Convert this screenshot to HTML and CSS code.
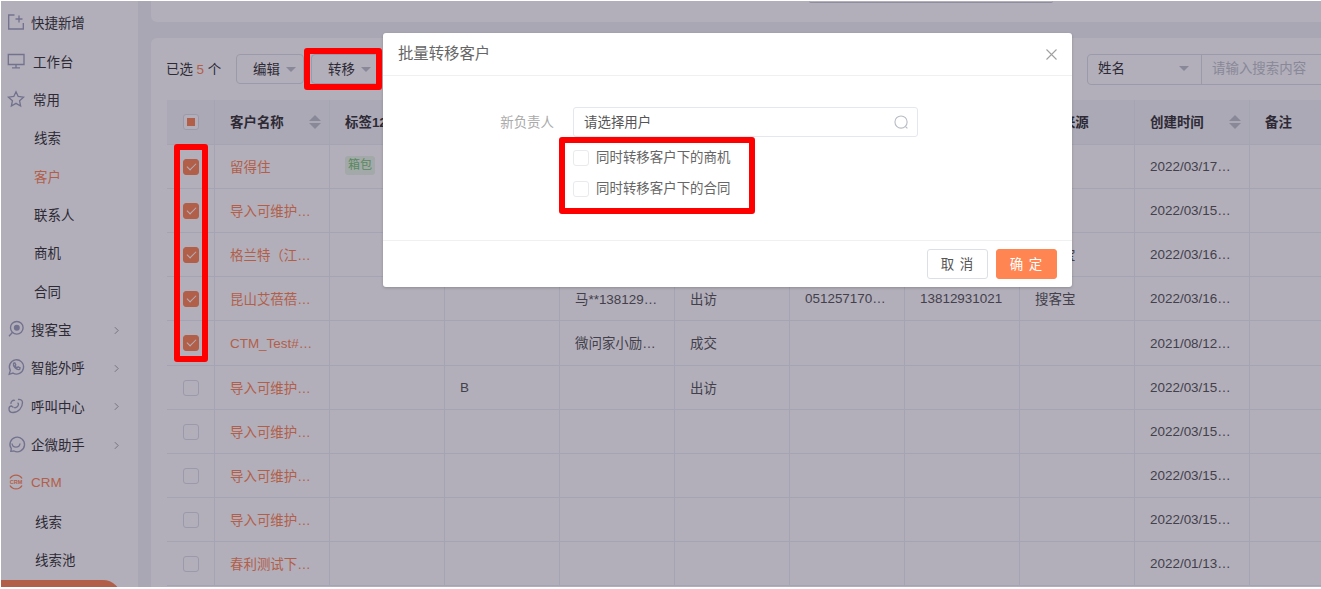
FILE: index.html
```html
<!DOCTYPE html>
<html lang="zh-CN">
<head>
<meta charset="utf-8">
<title>批量转移客户</title>
<link rel="stylesheet" href="styles.css">
</head>
<body>
<div class="app">
  <aside class="sidebar">
    <div class="nav-item"><svg class="nav-icon" viewBox="0 0 16 16"><path d="M6.500 1H.7v14h14.600V9M11 1.500v7M7.500 5h7"/></svg><span class="nav-label">快捷新增</span></div>
    <div class="nav-item"><svg class="nav-icon" viewBox="0 0 16 16"><path d="M.3 1.500h15.700v10H.3zM8 11.500v3.300M4 14.800h8"/></svg><span class="nav-label nav-label-b">工作台</span></div>
    <div class="nav-item"><svg class="nav-icon" viewBox="0 0 16 16"><path d="M8 .8l2.200 4.700 5.300.7-3.900 3.600 1 5.200L8 12.400 3.400 15l1-5.200L.5 6.200l5.300-.7z"/></svg><span class="nav-label nav-label-b">常用</span></div>
    <div class="nav-item"><span class="nav-sub">线索</span></div>
    <div class="nav-item nav-active"><span class="nav-sub">客户</span></div>
    <div class="nav-item"><span class="nav-sub">联系人</span></div>
    <div class="nav-item"><span class="nav-sub">商机</span></div>
    <div class="nav-item"><span class="nav-sub">合同</span></div>
    <div class="nav-item"><svg class="nav-icon" viewBox="0 0 16 16"><circle cx="8.800" cy="6.800" r="6.300"/><circle class="icon-fill" cx="8.800" cy="6.800" r="3"/><path d="M4.300 11.500L1 15.200"/></svg><span class="nav-label">搜客宝</span><svg class="nav-arrow" viewBox="0 0 6 10"><path d="M1 1l4 4-4 4"/></svg></div>
    <div class="nav-item"><svg class="nav-icon" viewBox="0 0 16 16"><path d="M1.200 15.300l1.100-3.900A7.100 7.100 0 1 1 5 14.100z"/><path d="M5.500 4.300c-.9 3.100 3 7 6.100 6.100l.5-1.500-2-1-1 .8C7.800 8.300 7.300 7.600 7 6.800l.8-1-1-1.900z"/></svg><span class="nav-label">智能外呼</span><svg class="nav-arrow" viewBox="0 0 6 10"><path d="M1 1l4 4-4 4"/></svg></div>
    <div class="nav-item"><svg class="nav-icon" viewBox="0 0 16 16"><path d="M10 1.500c2.500-.5 4.500 1 4.500 3 0 5-4 10-9.500 10-2.500 0-4-1.500-4-3.500 0-1.500 1-3 2.500-3l2 1.500M3 6C2.500 3.500 5 1.500 7 2.500M9.500 5c1.500.5 1 2.500 0 3.500s-2.500 1.500-3.500 1"/></svg><span class="nav-label">呼叫中心</span><svg class="nav-arrow" viewBox="0 0 6 10"><path d="M1 1l4 4-4 4"/></svg></div>
    <div class="nav-item"><svg class="nav-icon" viewBox="0 0 16 16"><path d="M2.800 15.300l.5-2.600A7.300 7.300 0 1 1 6 15z"/><path d="M4 7.500c.5 4.800 7.500 4.800 8 0"/></svg><span class="nav-label">企微助手</span><svg class="nav-arrow" viewBox="0 0 6 10"><path d="M1 1l4 4-4 4"/></svg></div>
    <div class="nav-item nav-active"><svg class="nav-icon nav-icon-crm" viewBox="0 0 16 16"><path d="M2 4.500a7 7 0 0 1 12 0M2 11.500a7 7 0 0 0 12 0"/><text class="crm-text" x="8" y="10">CRM</text></svg><span class="nav-label">CRM</span></div>
    <div class="nav-item"><span class="nav-sub nav-sub-b">线索</span></div>
    <div class="nav-item"><span class="nav-sub nav-sub-b">线索池</span></div>
    <div class="nav-pill"></div>
  </aside>

  <main class="main">
    <section class="top-card"><div class="top-field"></div></section>
    <section class="table-card">
      <div class="card-inner">
        <div class="toolbar">
          <div class="selection">已选 <em>5</em> 个</div>
          <button class="tool-btn">编辑<i class="caret"></i></button>
          <button class="tool-btn">转移<i class="caret"></i></button>
          <div class="search">
            <div class="search-select">姓名<i class="caret"></i></div>
            <div class="search-input">请输入搜索内容</div>
          </div>
        </div>
        <table class="grid">
          <colgroup><col class="col-check"><col span="10" class="col-data"></colgroup>
          <thead>
            <tr>
              <th class="check-cell"><span class="check check-partial"></span></th>
              <th><span class="th-sort">客户名称<i class="sort"></i></span></th>
              <th>标签12</th><th></th><th></th><th></th><th></th><th></th><th>客户来源</th>
              <th><span class="th-sort">创建时间<i class="sort"></i></span></th>
              <th>备注</th>
            </tr>
          </thead>
          <tbody>
            <tr><td class="check-cell"><span class="check check-on"></span></td><td class="link">留得住</td><td><span class="tag">箱包</span></td><td></td><td></td><td></td><td></td><td></td><td></td><td class="latin">2022/03/17…</td><td></td></tr>
            <tr><td class="check-cell"><span class="check check-on"></span></td><td class="link">导入可维护…</td><td></td><td></td><td></td><td></td><td></td><td></td><td></td><td class="latin">2022/03/15…</td><td></td></tr>
            <tr><td class="check-cell"><span class="check check-on"></span></td><td class="link">格兰特（江…</td><td></td><td></td><td></td><td></td><td></td><td></td><td>搜客宝</td><td class="latin">2022/03/16…</td><td></td></tr>
            <tr><td class="check-cell"><span class="check check-on"></span></td><td class="link">昆山艾蓓蓓…</td><td></td><td></td><td>马**138129…</td><td>出访</td><td class="latin">051257170…</td><td class="latin">13812931021</td><td>搜客宝</td><td class="latin">2022/03/16…</td><td></td></tr>
            <tr class="row-tall"><td class="check-cell"><span class="check check-on"></span></td><td class="link latin">CTM_Test#…</td><td></td><td></td><td>微问家小励…</td><td>成交</td><td></td><td></td><td></td><td class="latin">2021/08/12…</td><td></td></tr>
            <tr><td class="check-cell"><span class="check"></span></td><td class="link">导入可维护…</td><td></td><td class="latin">B</td><td></td><td>出访</td><td></td><td></td><td></td><td class="latin">2022/03/15…</td><td></td></tr>
            <tr><td class="check-cell"><span class="check"></span></td><td class="link">导入可维护…</td><td></td><td></td><td></td><td></td><td></td><td></td><td></td><td class="latin">2022/03/15…</td><td></td></tr>
            <tr><td class="check-cell"><span class="check"></span></td><td class="link">导入可维护…</td><td></td><td></td><td></td><td></td><td></td><td></td><td></td><td class="latin">2022/03/15…</td><td></td></tr>
            <tr><td class="check-cell"><span class="check"></span></td><td class="link">导入可维护…</td><td></td><td></td><td></td><td></td><td></td><td></td><td></td><td class="latin">2022/03/15…</td><td></td></tr>
            <tr><td class="check-cell"><span class="check"></span></td><td class="link">春利测试下…</td><td></td><td></td><td></td><td></td><td></td><td></td><td></td><td class="latin">2022/01/13…</td><td></td></tr>
          </tbody>
        </table>
      </div>
    </section>
  </main>

  <div class="overlay"></div>

  <div class="modal">
    <header class="modal-head">
      <span class="modal-title">批量转移客户</span>
      <svg class="modal-close" viewBox="0 0 11 11"><path d="M.5.500l10 10M10.500.500l-10 10"/></svg>
    </header>
    <div class="modal-body">
      <div class="form-row">
        <label class="form-label">新负责人</label>
        <div class="user-input"><span class="raised">请选择用户</span><svg class="search-icon" viewBox="0 0 16 16"><circle cx="7.500" cy="7.500" r="6.500"/><path d="M12.300 12.300l2 2"/></svg></div>
      </div>
      <div class="option-row"><span class="check check-modal"></span><span class="raised">同时转移客户下的商机</span></div>
      <div class="option-row"><span class="check check-modal"></span><span class="raised">同时转移客户下的合同</span></div>
    </div>
    <footer class="modal-foot">
      <button class="btn">取 消</button>
      <button class="btn btn-primary">确 定</button>
    </footer>
  </div>

  <div class="mark mark-transfer"></div>
  <div class="mark mark-checks"></div>
  <div class="mark mark-options"></div>
</div>
</body>
</html>
```
FILE: styles.css
```css
* { box-sizing: border-box; }
html, body { margin: 0; padding: 0; background: #fff; overflow: hidden; }
body {
  font-family: "Liberation Sans", "Noto Sans CJK SC", sans-serif;
  font-size: 13.44px;
  color: #333;
}
.app {
  position: relative;
  display: flex;
  height: 586px;
  margin: 1px 0 2px 1px;
  overflow: hidden;
  background: #f1f3f5;
}

/* sidebar */
.sidebar {
  position: relative;
  flex: 0 0 137px;
  padding-top: 2px;
  background: #fff;
  overflow: hidden;
}
.nav-item {
  position: relative;
  display: flex;
  align-items: center;
  height: 38.35px;
  padding-left: 7px;
  white-space: nowrap;
}
.nav-icon {
  flex: 0 0 16px;
  width: 16px;
  height: 16px;
  fill: none;
  stroke: #9da2bc;
  stroke-width: 1.35;
  overflow: visible;
}
.nav-icon .icon-fill { fill: #9da2bc; stroke: none; }
.nav-icon-crm { stroke: #ff8552; }
.crm-text {
  font-size: 5.500px;
  font-weight: 700;
  text-anchor: middle;
  fill: #ff8552;
  stroke: none;
}
.nav-label { margin-left: 7px; }
.nav-label-b { margin-left: 9px; }
.nav-sub { margin-left: 26px; }
.nav-sub-b { margin-left: 27px; }
.nav-active { color: #ff8552; }
.nav-arrow {
  position: absolute;
  left: 113px;
  top: 16px;
  width: 5px;
  height: 9px;
  fill: none;
  stroke: #999;
  stroke-width: 1.1;
}
.nav-pill {
  height: 30px;
  width: 120px;
  margin-top: 2px;
  background: #ff8552;
  border-radius: 0 18px 0 0;
}

/* main */
.main {
  flex: 1 1 auto;
  min-width: 0;
  padding-left: 13px;
}
.top-card {
  display: flex;
  justify-content: flex-end;
  height: 21px;
  background: #fff;
  border-radius: 0 0 0 6px;
}
.top-field {
  width: 244px;
  height: 2px;
  margin-right: 268px;
  border-bottom: 1px solid #c9ccd4;
  border-radius: 0 0 4px 4px;
}
.table-card {
  height: 550px;
  margin-top: 16px;
  padding-left: 16px;
  background: #fff;
  border-radius: 6px 0 0 0;
  overflow: hidden;
}
.card-inner { width: 1197px; }
.toolbar {
  display: flex;
  align-items: center;
  height: 30px;
  margin: 16px 0;
}
.selection { width: 69px; margin-left: -1px; padding-bottom: 3px; white-space: nowrap; }
.selection em { color: #ff8552; font-style: normal; }
.tool-btn {
  display: flex;
  align-items: center;
  justify-content: space-between;
  width: 68px;
  height: 30px;
  margin-right: 7px;
  padding: 0 7px 3px 16px;
  font: inherit;
  color: inherit;
  background: #fff;
  border: 1px solid #dcdfe6;
  border-radius: 4px;
}
.selection + .tool-btn { margin-left: 1px; }
.caret {
  display: block;
  width: 0;
  height: 0;
  margin-top: 3px;
  border-style: solid;
  border-width: 5px 5px 0;
  border-color: #c0c4cc transparent transparent;
}
.search {
  display: flex;
  margin-left: auto;
  margin-right: -1px;
  height: 31px;
  border: 1px solid #dcdfe6;
  border-radius: 4px;
}
.search-select {
  display: flex;
  align-items: center;
  justify-content: space-between;
  width: 114px;
  padding: 0 12px 4px 10px;
  border-right: 1px solid #dcdfe6;
}
.search-input {
  display: flex;
  align-items: center;
  width: 162px;
  padding: 0 0 4px 10px;
  color: #c0c4cc;
}

/* table */
.grid {
  width: 1197px;
  table-layout: fixed;
  border-collapse: separate;
  border-spacing: 0;
}
.col-check { width: 47px; }
.col-data { width: 115px; }
.grid th, .grid td {
  height: 44px;
  padding: 0 4px 2px 15px;
  border-left: 1px solid #ebeef5;
  border-bottom: 1px solid #ebeef5;
  overflow: hidden;
  white-space: nowrap;
  text-align: left;
  font-weight: 400;
}
.grid th {
  height: 45px;
  padding-right: 8px;
  font-weight: 700;
  background: #f5f6f8;
}
.grid .row-tall td { height: 45px; }
.grid .check-cell { padding: 0; border-left: 0; text-align: center; }
.grid td { color: #555; }
.grid td.link { color: #ff8552; }
.grid td.latin { padding-bottom: 0; }
.th-sort { display: flex; align-items: center; justify-content: space-between; }
.sort { display: block; position: relative; width: 12px; height: 14px; margin-top: 2px; }
.sort::before, .sort::after {
  content: "";
  position: absolute;
  left: 0;
  border-style: solid;
  border-color: transparent;
}
.sort::before { top: 0; border-width: 0 6px 6px; border-bottom-color: #c0c4cc; }
.sort::after { bottom: 0; border-width: 6px 6px 0; border-top-color: #c0c4cc; }
.tag {
  display: inline-block;
  padding: 0 3px;
  height: 19px;
  line-height: 18px;
  font-size: 12px;
  color: #75c675;
  background: #e8f6e4;
  border-radius: 3px;
  vertical-align: middle;
}
.check {
  display: inline-block;
  position: relative;
  width: 16px;
  height: 16px;
  background: #fff;
  border: 1px solid #dcdfe6;
  border-radius: 3px;
  vertical-align: middle;
}
.check-partial::after {
  content: "";
  position: absolute;
  left: 3px;
  top: 3px;
  width: 8px;
  height: 8px;
  background: #ff8552;
}
.check-on { background: #ff8552; border-color: #ff8552; }
.check-on::after {
  content: "";
  position: absolute;
  left: 3px;
  top: 3px;
  width: 8px;
  height: 4px;
  border-left: 1.500px solid #fff;
  border-bottom: 1.500px solid #fff;
  transform: rotate(-45deg);
}

/* overlay + dialog */
.overlay {
  position: absolute;
  inset: 0;
  background: rgba(35, 26, 56, .35);
}
.modal {
  position: absolute;
  left: 382px;
  top: 32px;
  width: 689px;
  height: 254px;
  background: #fff;
  border-radius: 3px;
  box-shadow: 0 1px 3px rgba(0, 0, 0, .2);
  display: flex;
  flex-direction: column;
}
.modal-head {
  display: flex;
  align-items: center;
  justify-content: space-between;
  flex: 0 0 43px;
  padding: 0 15px 0 15px;
  border-bottom: 1px solid #f0f0f0;
}
.modal-title { padding-bottom: 4px; font-size: 15.360px; color: #666; }
.modal-close { width: 11px; height: 11px; fill: none; stroke: #a0a0a0; stroke-width: 1.1; }
.modal-body { flex: 1 1 auto; padding-top: 31px; }
.form-row { display: flex; align-items: center; height: 30px; }
.form-label { width: 171px; padding-bottom: 3px; text-align: right; color: #aaa; }
.raised { padding-bottom: 3px; }
.user-input {
  display: flex;
  align-items: center;
  justify-content: space-between;
  width: 345px;
  height: 30px;
  margin-left: 19px;
  padding: 0 8px 0 10px;
  color: #555;
  border: 1px solid #e4e7ed;
  border-radius: 3px;
}
.search-icon { width: 15px; height: 15px; fill: none; stroke: #b8bcc4; stroke-width: 1.200; }
.option-row {
  display: flex;
  align-items: center;
  height: 31px;
  margin-left: 190px;
  color: #666;
}
.option-row:nth-child(2) { margin-top: 5px; }
.check-modal { margin-right: 7px; flex: 0 0 16px; border-color: #e8eaee; }
.modal-foot {
  display: flex;
  justify-content: flex-end;
  gap: 8px;
  flex: 0 0 47px;
  padding: 8px 15px 0 0;
  border-top: 1px solid #f0f0f0;
}
.btn {
  width: 61px;
  height: 30px;
  padding: 0 0 3px;
  font: inherit;
  letter-spacing: 1px;
  color: #555;
  background: #fff;
  border: 1px solid #dcdfe6;
  border-radius: 3px;
}
.btn-primary { color: #fff; background: #ff8552; border-color: #ff8552; }

/* red annotation frames */
.mark {
  position: absolute;
  border: 6px solid #ff0000;
  border-radius: 3px;
}
.mark-transfer { left: 303px; top: 47px; width: 78px; height: 42px; }
.mark-checks { left: 173px; top: 143px; width: 34px; height: 218px; }
.mark-options { left: 558px; top: 136px; width: 196px; height: 77px; }
```
